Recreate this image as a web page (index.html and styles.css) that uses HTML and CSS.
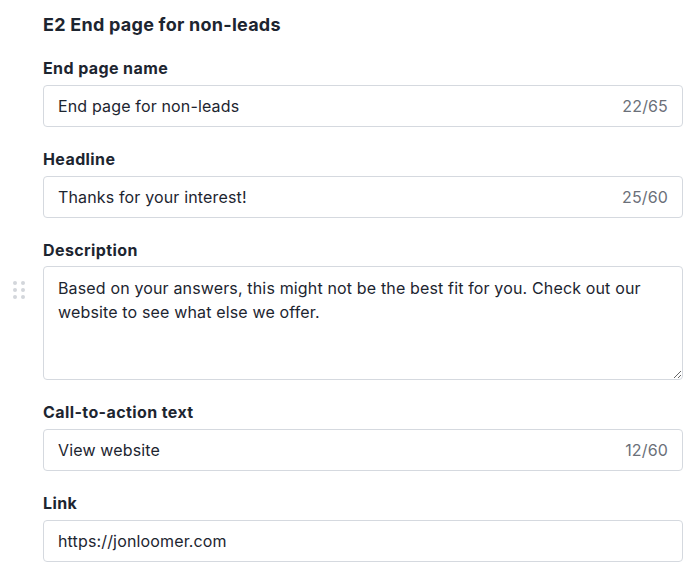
FILE: index.html
```html
<!DOCTYPE html>
<html lang="en">
<head>
<meta charset="utf-8">
<title>E2 End page for non-leads</title>
<link rel="stylesheet" href="styles.css">
</head>
<body>
<main class="panel">
  <h2 class="panel-title">E2 End page for non-leads</h2>

  <div class="field">
    <label class="field-label" for="f-name">End page name</label>
    <div class="input-box">
      <input id="f-name" class="input" type="text" value="End page for non-leads">
      <span class="counter">22/65</span>
    </div>
  </div>

  <div class="field">
    <label class="field-label" for="f-headline">Headline</label>
    <div class="input-box">
      <input id="f-headline" class="input" type="text" value="Thanks for your interest!">
      <span class="counter">25/60</span>
    </div>
  </div>

  <div class="field field-tight">
    <label class="field-label" for="f-desc">Description</label>
    <div class="textarea-wrap">
      <span class="drag-handle" aria-hidden="true">
        <i></i><i></i><i></i><i></i><i></i><i></i>
      </span>
      <textarea id="f-desc" class="textarea">Based on your answers, this might not be the best fit for you. Check out our website to see what else we offer.</textarea>
    </div>
  </div>

  <div class="field">
    <label class="field-label" for="f-cta">Call-to-action text</label>
    <div class="input-box">
      <input id="f-cta" class="input" type="text" value="View website">
      <span class="counter">12/60</span>
    </div>
  </div>

  <div class="field">
    <label class="field-label" for="f-link">Link</label>
    <div class="input-box">
      <input id="f-link" class="input" type="text" value="https://jonloomer.com">
    </div>
  </div>
</main>
</body>
</html>
```

FILE: styles.css
```css
* { box-sizing: border-box; }

html, body {
  margin: 0;
  padding: 0;
  background: #ffffff;
}

body {
  font-family: Inter, "Noto Sans", "Liberation Sans", sans-serif;
  color: #1d2530;
}

.panel {
  width: 683px;
  padding: 11px 0 0 43px;
  display: flex;
  flex-direction: column;
  gap: 20px;
}

.panel-title {
  margin: 0 0 -3px;
  font-size: 18px;
  line-height: 28px;
  font-weight: 700;
  letter-spacing: 0.25px;
  color: #1d2530;
}

.field {
  display: flex;
  flex-direction: column;
  gap: 5px;
}

.field-tight {
  gap: 4px;
}

.field-label {
  font-size: 16px;
  line-height: 24px;
  font-weight: 700;
  letter-spacing: 0.4px;
  color: #1d2530;
}

.input-box {
  display: flex;
  align-items: center;
  height: 42px;
  border: 1px solid #d5d9df;
  border-radius: 4px;
  padding: 0 14px;
  background: #fff;
}

.input {
  flex: 1;
  min-width: 0;
  border: 0;
  outline: 0;
  padding: 0;
  margin: 0;
  font: inherit;
  font-size: 16px;
  line-height: 24px;
  letter-spacing: 0.15px;
  color: #1d2530;
  background: transparent;
}

.counter {
  font-size: 16px;
  line-height: 24px;
  letter-spacing: 0.15px;
  color: #6b7079;
}

.textarea-wrap {
  position: relative;
}

.textarea {
  display: block;
  width: 640px;
  height: 114px;
  border: 1px solid #d5d9df;
  border-radius: 4px;
  padding: 9px 14px;
  margin: 0;
  font: inherit;
  font-size: 16px;
  line-height: 24px;
  letter-spacing: 0.15px;
  color: #1d2530;
  resize: vertical;
  outline: 0;
  background: #fff;
}

.drag-handle {
  position: absolute;
  left: -30px;
  top: 15px;
  display: grid;
  grid-template-columns: 4px 4px;
  column-gap: 4px;
  row-gap: 3px;
}

.drag-handle i {
  display: block;
  width: 4px;
  height: 4px;
  border-radius: 50%;
  background: #d3d6db;
}
```
